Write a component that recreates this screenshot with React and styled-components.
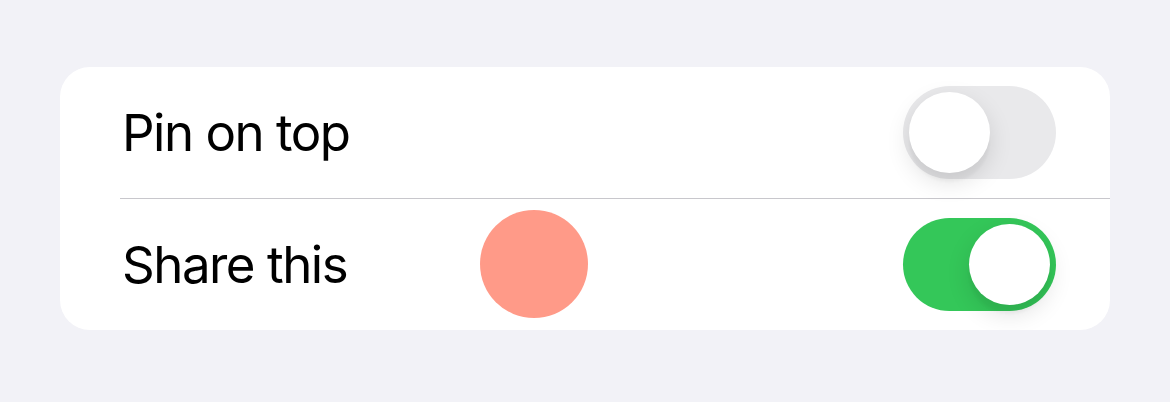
import styled, { createGlobalStyle } from "styled-components";

const GlobalStyle = createGlobalStyle`
  html, body {
    margin: 0;
    padding: 0;
    background: #f2f2f7;
    font-family: Inter, "Noto Sans", "Liberation Sans", sans-serif;
    -webkit-font-smoothing: antialiased;
  }
`;

const Page = styled.div`
  width: 1170px;
  height: 402px;
  box-sizing: border-box;
  padding: 67px 60px 0 60px;
  background: #f2f2f7;
`;

const Card = styled.div`
  position: relative;
  background: #ffffff;
  border-radius: 30px;
  overflow: hidden;
`;

const Row = styled.div`
  padding-left: 60px;
`;

const RowInner = styled.div`
  height: 131px;
  display: flex;
  align-items: center;
  justify-content: space-between;
  padding-right: 54px;
  border-bottom: ${(p) => (p.$last ? "none" : "1px solid #c8c7cc")};
`;

const Label = styled.span`
  font-size: 51px;
  color: #000;
  letter-spacing: -1.5px;
  padding-left: 2px;
`;

const Track = styled.div`
  width: 153px;
  height: 93px;
  border-radius: 47px;
  box-sizing: border-box;
  padding: 6px;
  display: flex;
  justify-content: ${(p) => (p.$on ? "flex-end" : "flex-start")};
  background: ${(p) => (p.$on ? "#34c759" : "#e9e9eb")};
`;

const Thumb = styled.div`
  width: 81px;
  height: 81px;
  border-radius: 50%;
  background: #ffffff;
  box-shadow: 0 9px 24px rgba(0, 0, 0, 0.12), 0 9px 3px rgba(0, 0, 0, 0.03);
`;

const Touch = styled.div`
  position: absolute;
  left: 420px;
  top: 143px;
  width: 108px;
  height: 108px;
  border-radius: 50%;
  background: #ff9a88;
`;

function Toggle({ on }) {
  return (
    <Track $on={on}>
      <Thumb />
    </Track>
  );
}

export default function App() {
  return (
    <>
      <GlobalStyle />
      <Page>
        <Card>
          <Row>
            <RowInner>
              <Label>Pin on top</Label>
              <Toggle on={false} />
            </RowInner>
          </Row>
          <Row>
            <RowInner $last>
              <Label>Share this</Label>
              <Toggle on />
            </RowInner>
          </Row>
          <Touch />
        </Card>
      </Page>
    </>
  );
}
